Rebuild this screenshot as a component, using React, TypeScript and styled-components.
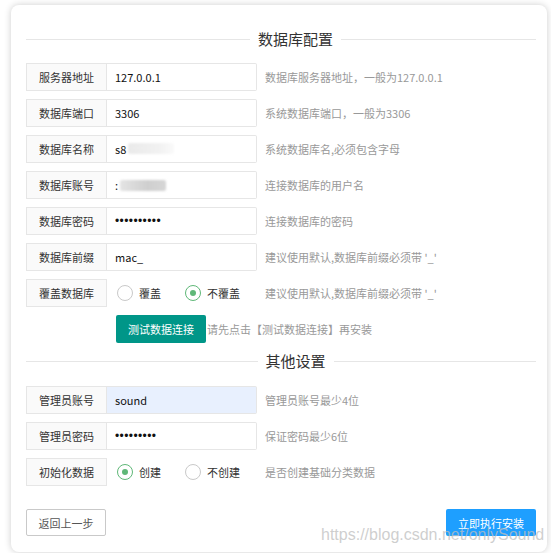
import styled, { createGlobalStyle } from 'styled-components'

const GlobalStyle = createGlobalStyle`
  html, body {
    margin: 0;
    padding: 0;
    background: #fff;
  }
  body {
    font-family: "Noto Sans CJK SC", "Noto Sans", sans-serif;
    color: #333;
  }
  * {
    box-sizing: border-box;
  }
`

type Field = {
    label: string
    value: string
    hint: string
    password?: boolean
    mask?: 'light' | 'dark'
}

const dbFields: Field[] = [
    {label: '服务器地址', value: '127.0.0.1', hint: '数据库服务器地址，一般为127.0.0.1'},
    {label: '数据库端口', value: '3306', hint: '系统数据库端口，一般为3306'},
    {label: '数据库名称', value: 's8', hint: '系统数据库名,必须包含字母', mask: 'light'},
    {label: '数据库账号', value: ':', hint: '连接数据库的用户名', mask: 'dark'},
    {label: '数据库密码', value: '••••••••••', hint: '连接数据库的密码', password: true},
    {label: '数据库前缀', value: 'mac_', hint: "建议使用默认,数据库前缀必须带 '_'"},
]

const adminFields: Field[] = [
    {label: '管理员账号', value: 'sound', hint: '管理员账号最少4位'},
    {label: '管理员密码', value: '•••••••••', hint: '保证密码最少6位', password: true},
]

export default () => {
    return (
        <Page>
            <GlobalStyle/>
            <Card>
                <Legend>
                    <Rule $lead/>
                    <LegendText>数据库配置</LegendText>
                    <Rule/>
                </Legend>
                {dbFields.map((f) => <FieldRow key={f.label} field={f}/>)}
                <Row>
                    <Label>覆盖数据库</Label>
                    <RadioGroup>
                        <Radio><Dot/>覆盖</Radio>
                        <Radio><Dot $on/>不覆盖</Radio>
                    </RadioGroup>
                    <Hint>建议使用默认,数据库前缀必须带 '_'</Hint>
                </Row>
                <TestRow>
                    <TestButton>测试数据连接</TestButton>
                    <TestHint>请先点击【测试数据连接】再安装</TestHint>
                </TestRow>

                <Legend $second>
                    <Rule $lead/>
                    <LegendText>其他设置</LegendText>
                    <Rule/>
                </Legend>
                {adminFields.map((f) => <FieldRow key={f.label} field={f} autofill={f.label === '管理员账号'}/>)}
                <Row>
                    <Label>初始化数据</Label>
                    <RadioGroup>
                        <Radio><Dot $on/>创建</Radio>
                        <Radio><Dot/>不创建</Radio>
                    </RadioGroup>
                    <Hint>是否创建基础分类数据</Hint>
                </Row>

                <Footer>
                    <BackButton>返回上一步</BackButton>
                    <InstallButton>立即执行安装</InstallButton>
                </Footer>
            </Card>
            <Watermark>https://blog.csdn.net/onlySound</Watermark>
        </Page>
    )
}

// password values are shown as bullet text so the dots keep the tight spacing of the shot
const FieldRow = ({field, autofill}: { field: Field, autofill?: boolean }) => (
    <Row>
        <Label>{field.label}</Label>
        <InputWrap>
            <Input
                readOnly
                type="text"
                value={field.value}
                $autofill={autofill}
                $dots={field.password}
            />
            {field.mask && <Mask $kind={field.mask}/>}
        </InputWrap>
        <Hint>{field.hint}</Hint>
    </Row>
)

const Page = styled.div`
    position: relative;
    width: 551px;
    height: 553px;
    padding: 5px 4px 0 11px;
`

const Card = styled.div`
    display: flex;
    flex-direction: column;
    background: #fff;
    border-radius: 8px;
    box-shadow: rgba(0, 0, 0, 0.2) 0 0 7px;
    padding: 24px 11px 16px 15px;
`

const Legend = styled.div<{ $second?: boolean }>`
    display: flex;
    align-items: center;
    height: 20px;
    margin-top: ${(p) => (p.$second ? '8px' : '0')};
    margin-bottom: ${(p) => (p.$second ? '15px' : '14px')};
`

const Rule = styled.div<{ $lead?: boolean }>`
    flex: 1 0 ${(p) => (p.$lead ? '29px' : '0px')};
    height: 1px;
    background: #e6e6e6;
`

const LegendText = styled.span`
    padding: 0 8px;
    font-size: 15px;
    line-height: 20px;
    color: #333;
`

const Row = styled.div`
    display: flex;
    align-items: center;
    height: 28px;
    margin-bottom: 8px;
`

const Label = styled.div`
    width: 81px;
    height: 28px;
    flex: none;
    border: 1px solid #e6e6e6;
    background: #fafafa;
    font-size: 11px;
    line-height: 26px;
    text-align: center;
    color: #333;
`

const InputWrap = styled.div`
    position: relative;
    width: 150px;
    height: 28px;
    flex: none;
`

const Input = styled.input<{ $autofill?: boolean, $dots?: boolean }>`
    display: block;
    width: 100%;
    height: 100%;
    margin: 0;
    padding: 0 0 0 8px;
    border: 1px solid #e6e6e6;
    border-left: none;
    border-radius: 0 2px 2px 0;
    background: ${(p) => (p.$autofill ? '#e8f0fe' : '#fff')};
    font-family: ${(p) => (p.$dots ? '"Liberation Sans", Arial, sans-serif' : '"Noto Sans CJK SC", "Noto Sans", sans-serif')};
    font-size: ${(p) => (p.$dots ? '12px' : '11px')};
    letter-spacing: ${(p) => (p.$dots ? '0.4px' : '0')};
    color: #111;
    outline: none;
`

const Mask = styled.span<{ $kind: 'light' | 'dark' }>`
    position: absolute;
    top: ${(p) => (p.$kind === 'dark' ? '9px' : '8px')};
    left: ${(p) => (p.$kind === 'dark' ? '13px' : '21px')};
    width: 46px;
    height: 11px;
    border-radius: 2px;
    background: ${(p) => (p.$kind === 'dark'
        ? 'linear-gradient(90deg, #e4e4e4, #cfcfcf 60%, #d6d6d6)'
        : 'linear-gradient(90deg, #eaeaea, #f2f2f2 70%, #fafafa)')};
    filter: blur(1px);
`

const Hint = styled.span`
    margin-left: 8px;
    font-size: 11px;
    color: #999;
    white-space: nowrap;
`

const RadioGroup = styled.div`
    display: flex;
    align-items: center;
    width: 150px;
    height: 28px;
    padding-left: 10px;
    flex: none;
`

const Radio = styled.label`
    display: flex;
    align-items: center;
    gap: 6px;
    margin-right: 24px;
    font-size: 11px;
    color: #333;
    white-space: nowrap;
`

const Dot = styled.span<{ $on?: boolean }>`
    position: relative;
    width: 16px;
    height: 16px;
    flex: none;
    border-radius: 50%;
    border: 1px solid ${(p) => (p.$on ? '#5fb878' : '#c9c9c9')};
    background: #fff;

    &::after {
        content: '';
        display: ${(p) => (p.$on ? 'block' : 'none')};
        position: absolute;
        left: 4px;
        top: 4px;
        width: 6px;
        height: 6px;
        border-radius: 50%;
        background: #5fb878;
    }
`

const TestRow = styled.div`
    display: flex;
    align-items: center;
    padding-left: 90px;
`

const TestButton = styled.button`
    width: 90px;
    height: 28px;
    border: none;
    border-radius: 2px;
    background: #009688;
    color: #fff;
    font-family: inherit;
    font-size: 11px;
    padding: 0;
`

const TestHint = styled.span`
    margin-left: 1px;
    font-size: 11px;
    color: #999;
`

const Footer = styled.div`
    display: flex;
    justify-content: space-between;
    margin-top: 15px;
`

const BackButton = styled.button`
    width: 80px;
    height: 27px;
    padding: 0;
    border: 1px solid #c9c9c9;
    border-radius: 2px;
    background: #fff;
    color: #555;
    font-family: inherit;
    font-size: 11px;
`

const InstallButton = styled.button`
    width: 90px;
    height: 27px;
    padding: 0;
    border: none;
    border-radius: 2px;
    background: #1e9fff;
    color: #fff;
    font-family: inherit;
    font-size: 11px;
`

const Watermark = styled.div`
    position: absolute;
    left: 321px;
    top: 527px;
    font-family: "Liberation Sans", Arial, sans-serif;
    font-size: 16px;
    line-height: 16px;
    color: rgba(190, 190, 190, 0.75);
    pointer-events: none;
    white-space: nowrap;
`
